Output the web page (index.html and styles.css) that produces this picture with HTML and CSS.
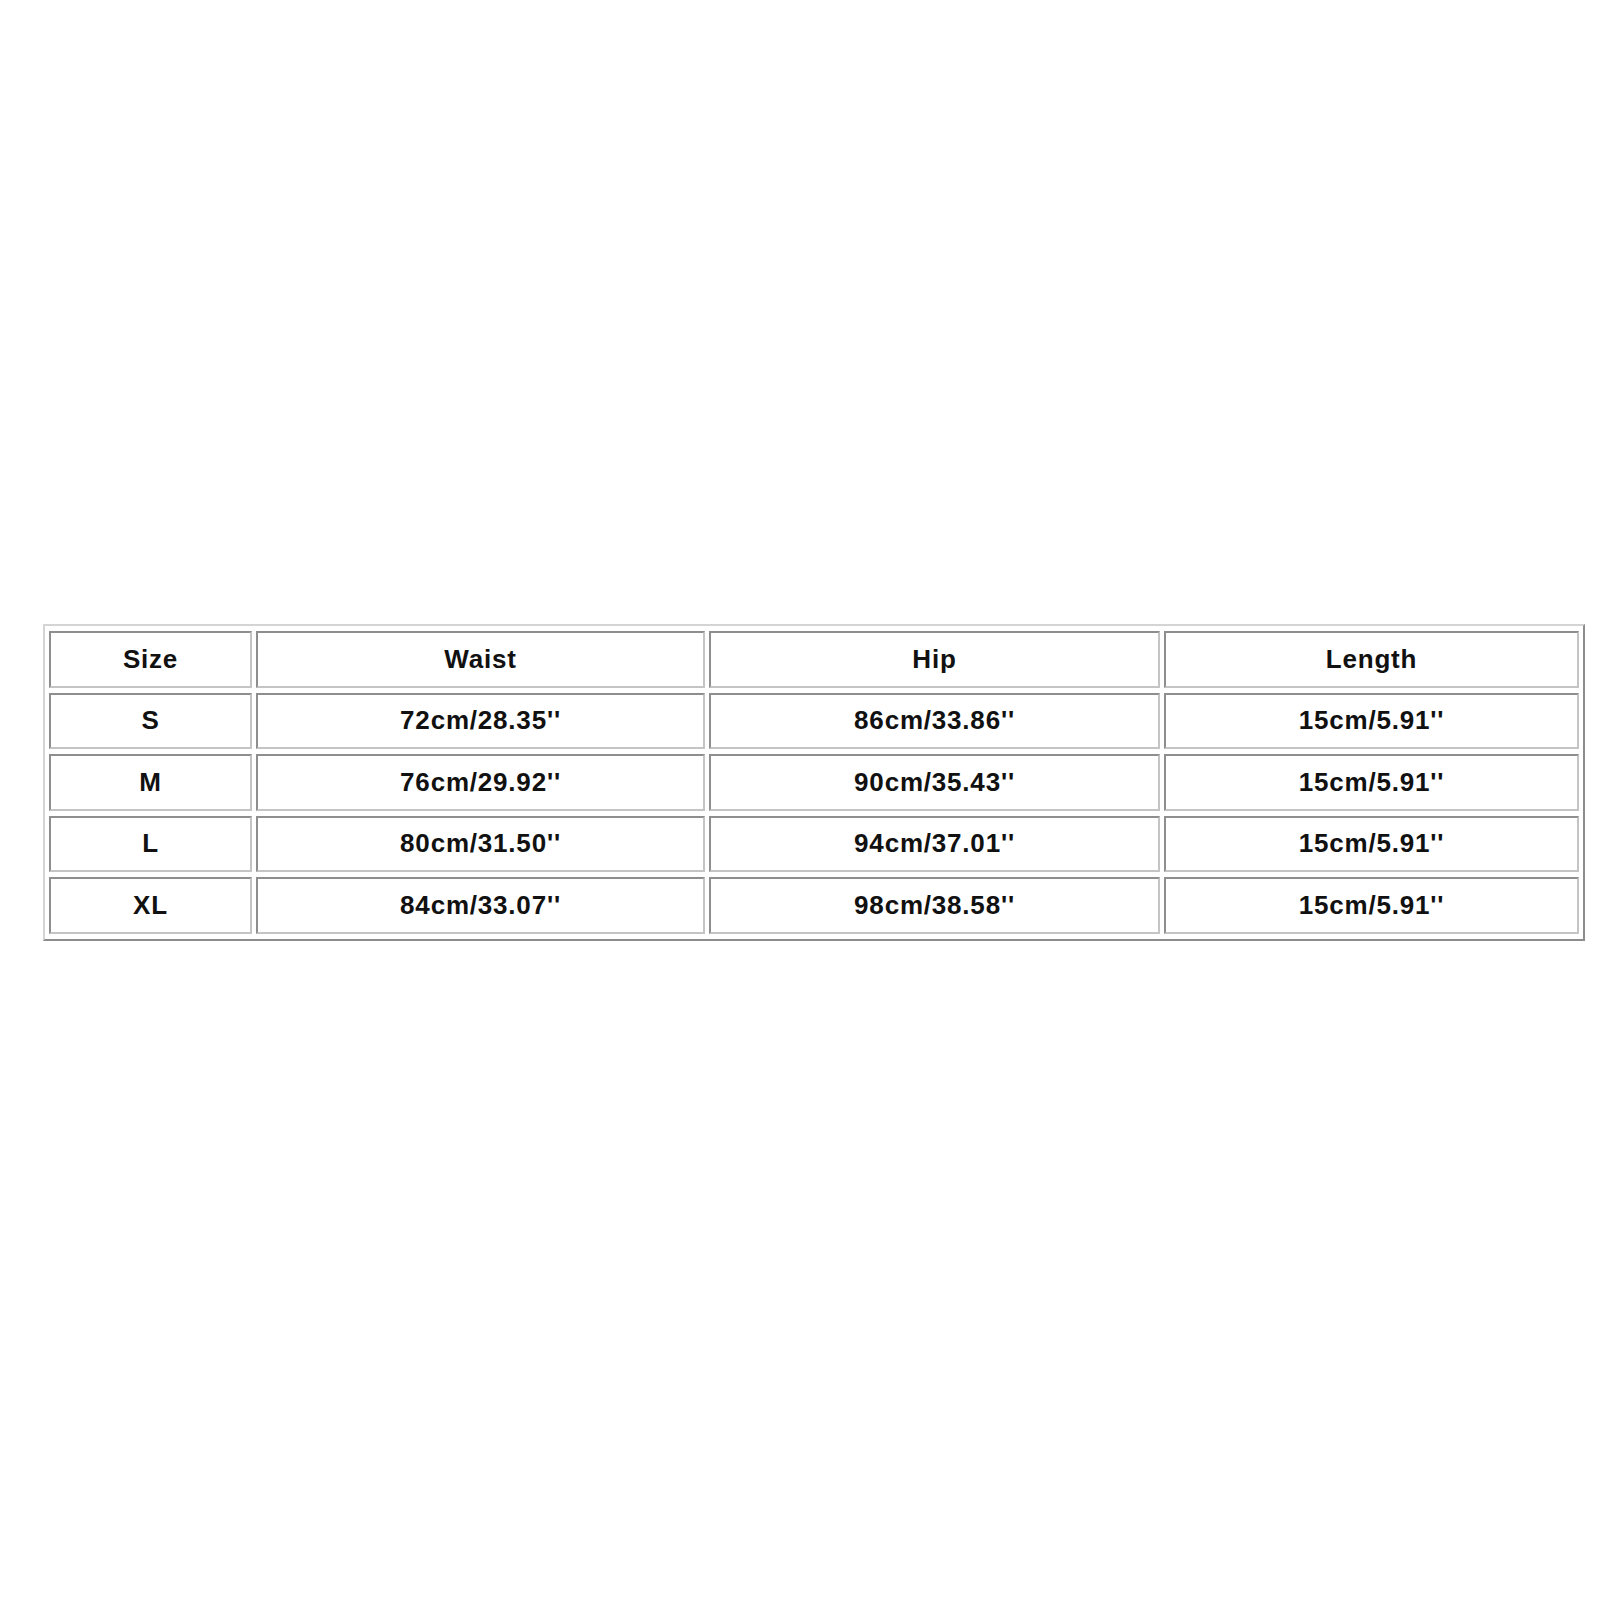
FILE: index.html
```html
<!DOCTYPE html>
<html>
<head>
<meta charset="utf-8">
<link rel="stylesheet" href="styles.css">
</head>
<body>
<div class="page">
<table class="chart">
  <tr><td class="c1">Size</td><td class="c2">Waist</td><td class="c3">Hip</td><td class="c4">Length</td></tr>
  <tr><td>S</td><td>72cm/28.35''</td><td>86cm/33.86''</td><td>15cm/5.91''</td></tr>
  <tr><td>M</td><td>76cm/29.92''</td><td>90cm/35.43''</td><td>15cm/5.91''</td></tr>
  <tr><td>L</td><td>80cm/31.50''</td><td>94cm/37.01''</td><td>15cm/5.91''</td></tr>
  <tr><td>XL</td><td>84cm/33.07''</td><td>98cm/38.58''</td><td>15cm/5.91''</td></tr>
</table>
</div>
</body>
</html>
```
FILE: styles.css
```css
html, body {
  margin: 0;
  padding: 0;
  background: #ffffff;
}
.page {
  width: 1600px;
  height: 1600px;
  padding-top: 624px;
  padding-left: 43px;
  box-sizing: border-box;
}
.chart {
  border-collapse: separate;
  border-spacing: 4px 5px;
  border-style: solid;
  border-width: 2px;
  border-color: #d4d4d4 #8c8c8c #8c8c8c #d4d4d4;
  table-layout: fixed;
}
.chart td {
  box-sizing: border-box;
  height: 56.5px;
  padding: 0;
  border-style: solid;
  border-width: 2px;
  border-color: #8e8e8e #c4c4c4 #c4c4c4 #8e8e8e;
  text-align: center;
  vertical-align: middle;
  font-family: "Liberation Sans", Arial, sans-serif;
  font-weight: bold;
  font-size: 26px;
  letter-spacing: 0.8px;
  color: #111111;
}
.chart td.c1 { width: 203px; }
.chart td.c2 { width: 449px; }
.chart td.c3 { width: 451px; }
.chart td.c4 { width: 415px; }
```
